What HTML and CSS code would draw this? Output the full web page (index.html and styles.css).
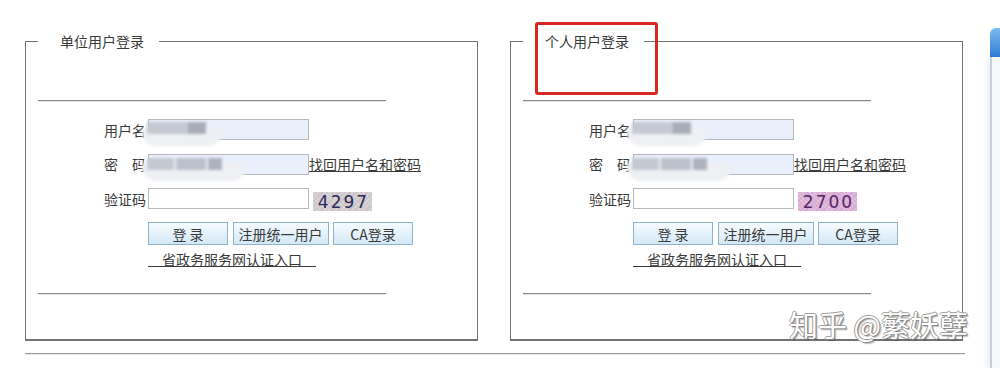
FILE: index.html
```html
<!DOCTYPE html>
<html lang="zh-CN">
<head>
<meta charset="utf-8">
<title>用户登录</title>
<link rel="stylesheet" href="styles.css">
</head>
<body>
<div class="page">
  <div class="main">
    <div class="panels">
      <fieldset class="panel">
        <legend>单位用户登录</legend>
        <hr class="sep">
        <div class="form">
          <div class="row">
            <label class="lbl">用户名</label>
            <span class="field">
              <input class="inp filled" type="text">
              <span class="mask m1"><i class="b1"></i><i class="b2"></i><i class="lump"></i></span>
            </span>
          </div>
          <div class="row">
            <label class="lbl">密&emsp;码</label>
            <span class="field">
              <input class="inp filled" type="password">
              <span class="mask m2"><i class="b1"></i><i class="b2"></i><i class="b3"></i><i class="lump"></i></span>
            </span>
            <a class="link" href="#">找回用户名和密码</a>
          </div>
          <div class="row">
            <label class="lbl">验证码</label>
            <span class="field"><input class="inp" type="text"></span>
            <span class="cap cap-gray">4297</span>
          </div>
          <div class="btns">
            <button class="btn w80">登 录</button>
            <button class="btn w96">注册统一用户</button>
            <button class="btn w80">CA登录</button>
          </div>
          <a class="portal" href="#">&ensp;&ensp;省政务服务网认证入口&ensp;&ensp;</a>
        </div>
        <hr class="sep bottom">
      </fieldset>

      <fieldset class="panel">
        <legend>个人用户登录</legend>
        <hr class="sep">
        <div class="form">
          <div class="row">
            <label class="lbl">用户名</label>
            <span class="field">
              <input class="inp filled" type="text">
              <span class="mask m1"><i class="b1"></i><i class="b2"></i><i class="lump"></i></span>
            </span>
          </div>
          <div class="row">
            <label class="lbl">密&emsp;码</label>
            <span class="field">
              <input class="inp filled" type="password">
              <span class="mask m2"><i class="b1"></i><i class="b2"></i><i class="b3"></i><i class="lump"></i></span>
            </span>
            <a class="link" href="#">找回用户名和密码</a>
          </div>
          <div class="row">
            <label class="lbl">验证码</label>
            <span class="field"><input class="inp" type="text"></span>
            <span class="cap cap-pink">2700</span>
          </div>
          <div class="btns">
            <button class="btn w80">登 录</button>
            <button class="btn w96">注册统一用户</button>
            <button class="btn w80">CA登录</button>
          </div>
          <a class="portal" href="#">&ensp;&ensp;省政务服务网认证入口&ensp;&ensp;</a>
        </div>
        <hr class="sep bottom">
      </fieldset>
    </div>
    <div class="rule"></div>
    <div class="redmark"></div>
    <div class="watermark">知乎 @蘩妖孽</div>
  </div>
  <div class="aside">
    <div class="aside-head"></div>
    <div class="aside-body"></div>
  </div>
</div>
</body>
</html>
```

FILE: styles.css
```css
html, body {
  margin: 0;
  padding: 0;
  background: #fff;
}
body {
  font-family: "Noto Sans CJK SC", "Microsoft YaHei", sans-serif;
  font-size: 14px;
  color: #3a3a3a;
  overflow: hidden;
}
.page {
  display: flex;
  height: 368px;
}
.main {
  position: relative;
  width: 990px;
  box-sizing: border-box;
  padding: 31px 0 0 25px;
}
.panels {
  display: flex;
  gap: 32px;
}
.panel {
  width: 453px;
  box-sizing: border-box;
  min-width: 0;
  margin: 0;
  padding: 0 0 44px 0;
  border: 1px solid #737373;
  border-bottom-width: 2px;
}
.panel legend {
  margin-left: 12px;
  padding: 0 15px 0 22px;
  line-height: 20px;
  font-size: 14px;
  color: #3a3a3a;
}
.sep {
  display: block;
  margin: 49px 0 0 12px;
  width: 348px;
  height: 0;
  border: 0;
  border-top: 1px solid #8a8a8a;
  border-bottom: 1px solid #e4e4e4;
}
.sep.bottom {
  margin-top: 24px;
}
.form {
  padding: 17px 0 0 78px;
  display: flex;
  flex-direction: column;
  align-items: flex-start;
}
.row {
  display: flex;
  align-items: center;
  height: 21px;
  margin-bottom: 13.5px;
}
.lbl {
  width: 44px;
  white-space: nowrap;
}
.field {
  position: relative;
  display: block;
  width: 161px;
  height: 21px;
}
.inp {
  display: block;
  width: 161px;
  height: 21px;
  box-sizing: border-box;
  margin: 0;
  padding: 0;
  border: 1px solid #b9b9b9;
  background: #fff;
}
.inp.filled {
  background: #e9f0fc;
}
.mask {
  position: absolute;
  left: -4px;
  top: 1px;
  width: 110px;
  height: 30px;
  filter: blur(1.8px);
  pointer-events: none;
}
.mask i {
  position: absolute;
  display: block;
}
.mask .lump {
  left: -2px;
  top: 8px;
  width: 80px;
  height: 18px;
  border-radius: 0 0 14px 14px;
  background: #eef0f3;
  z-index: 0;
}
.m1 .b1 {
  left: 3px; top: 2px; width: 46px; height: 12px;
  background: #c5c9d2; z-index: 1;
}
.m1 .b2 {
  left: 44px; top: 2px; width: 18px; height: 12px;
  background: #a8acb7; z-index: 1;
}
.m2 .lump {
  width: 104px;
}
.m2 .b1 {
  left: 3px; top: 3px; width: 27px; height: 12px;
  background: #c4c8d1; z-index: 1;
}
.m2 .b2 {
  left: 32px; top: 3px; width: 30px; height: 12px;
  background: #bcc0ca; z-index: 1;
}
.m2 .b3 {
  left: 64px; top: 3px; width: 14px; height: 12px;
  background: #adb1bc; z-index: 1;
}
.link {
  color: #3a3a3a;
  text-decoration: underline;
  white-space: nowrap;
}
.cap {
  align-self: flex-end;
  margin: 0 0 -2px 4px;
  width: 59px;
  height: 19px;
  display: flex;
  align-items: center;
  justify-content: center;
  font-family: "DejaVu Sans", sans-serif;
  font-size: 17px;
  letter-spacing: 2px;
  padding-left: 2px;
  box-sizing: border-box;
}
.cap-gray {
  color: #2d2a58;
  background:
    repeating-linear-gradient(45deg, rgba(255,255,255,.18) 0 1px, transparent 1px 3px),
    repeating-linear-gradient(-45deg, rgba(120,110,120,.15) 0 1px, transparent 1px 4px),
    #d3cdd1;
}
.cap-pink {
  color: #5a2465;
  background:
    repeating-linear-gradient(45deg, rgba(255,255,255,.2) 0 1px, transparent 1px 3px),
    repeating-linear-gradient(-45deg, rgba(150,80,150,.15) 0 1px, transparent 1px 4px),
    #dcb3d8;
}
.btns {
  display: flex;
  gap: 4.5px;
  margin: -0.5px 0 0 44px;
}
.btn {
  height: 23px;
  margin: 0;
  padding: 0;
  font-family: "Noto Sans CJK SC", "Microsoft YaHei", sans-serif;
  font-size: 14px;
  color: #3a3a3a;
  border: 1px solid #8fb4ca;
  background: linear-gradient(#f6fbff, #d3e8f6);
}
.w80 { width: 80px; }
.w96 { width: 96px; }
.portal {
  display: block;
  margin: 4px 0 0 44px;
  line-height: 20px;
  color: #3a3a3a;
  text-decoration: underline;
  white-space: pre;
}
.rule {
  margin-top: 12px;
  width: 940px;
  height: 0;
  border-top: 1px solid #9a9a9a;
  border-bottom: 1px solid #ececec;
}
.redmark {
  position: absolute;
  left: 535px;
  top: 22px;
  width: 123px;
  height: 73px;
  box-sizing: border-box;
  border: 3px solid #d8281f;
  border-radius: 3px;
}
.watermark {
  position: absolute;
  left: 789px;
  top: 305px;
  font-size: 29px;
  line-height: 38px;
  color: #fff;
  white-space: nowrap;
  text-shadow: 1px 1px 0 #8a8a8a, -1px 0 0 #a0a0a0, 0 -1px 0 #a0a0a0, 1px 0 0 #909090, 2px 2px 1px rgba(0,0,0,.25);
}
.aside {
  width: 10px;
  margin-top: 28px;
  display: flex;
  flex-direction: column;
}
.aside-head {
  height: 29px;
  border-radius: 6px 0 0 0;
  background: linear-gradient(#7dbbf0, #2f7dd4);
}
.aside-body {
  flex: 1;
  background: #f6f8fa;
  border-left: 2px solid #c6d0da;
  box-shadow: -3px 0 6px rgba(0,0,0,.08);
}
```
